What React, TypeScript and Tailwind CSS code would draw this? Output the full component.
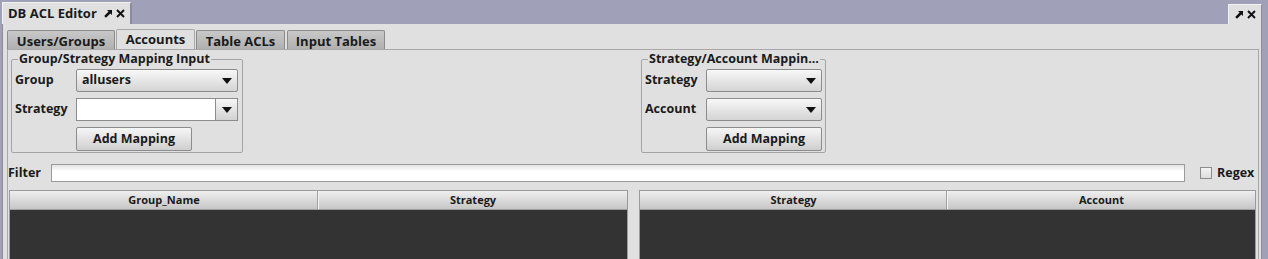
import { ReactNode } from "react"

const font = "font-['Open_Sans','DejaVu_Sans',sans-serif]"

function Caret () {
    return (
        <svg width="10" height="6" viewBox="0 0 10 6">
            <path d="M0 0 L10 0 L5 6 Z" fill="#111" />
        </svg>
    )
}

function UndockIcon () {
    return (
        <svg width="8" height="8" viewBox="0 0 8 8">
            <path d="M3 0 L8 0 L8 5 L6.4 3.4 L2 7.8 L0.2 6 L4.6 1.6 Z" fill="#111" />
        </svg>
    )
}

function CloseIcon () {
    return (
        <svg width="9" height="9" viewBox="0 0 9 9">
            <path d="M1 1 L8 8 M8 1 L1 8" stroke="#111" strokeWidth="1.9" />
        </svg>
    )
}

function Combo ({ value, width, editable }: { value?: string, width: string, editable?: boolean }) {
    if (editable) {
        return (
            <div className={ `flex h-[23px] ${ width }` }>
                <div className="flex-1 border border-[#8c8c8c] bg-white" />
                <div className="w-[22px] flex items-center justify-center border border-l-0 border-[#8c8c8c] bg-linear-to-b from-[#f6f6f6] to-[#d2d2d2]">
                    <Caret />
                </div>
            </div>
        )
    }
    return (
        <div className={ `flex items-center h-[23px] ${ width } border border-[#8c8c8c] rounded-[2px] bg-linear-to-b from-[#f8f8f8] to-[#d4d4d4] pl-[5px] pr-[5px]` }>
            <span className="flex-1 truncate">{ value }</span>
            <Caret />
        </div>
    )
}

function Button ({ children, width }: { children: ReactNode, width: string }) {
    return (
        <div className={ `flex items-center justify-center h-[24px] ${ width } border border-[#8c8c8c] rounded-[2px] bg-linear-to-b from-[#f6f6f6] to-[#cfcfcf]` }>
            { children }
        </div>
    )
}

function GroupBox ({ title, width, rows }: { title: string, width: string, rows: { label: string, combo: ReactNode }[] }) {
    return (
        <fieldset className={ `${ width } border border-[#a4a4a4] rounded-[2px] pl-[3px] pr-[3px] pb-[1px]` }>
            <legend className="ml-[3px] px-[1px] leading-[14px] whitespace-nowrap">{ title }</legend>
            <div className="flex flex-col gap-[6px] mt-[3px]">
                { rows.map(row => (
                    <div key={ row.label } className="flex items-center">
                        <span className="w-[61px]">{ row.label }</span>
                        { row.combo }
                    </div>
                )) }
                <div className="flex pl-[61px]">
                    <Button width="w-[116px]">Add Mapping</Button>
                </div>
            </div>
        </fieldset>
    )
}

function Table ({ cols, width }: { cols: string[], width: string }) {
    return (
        <div className={ `${ width } flex flex-col border border-[#9a9a9a] bg-[#333333] h-[80px]` }>
            <div className="flex h-[19px] bg-linear-to-b from-[#efefef] to-[#c6c6c6] border-b border-[#a0a0a0]">
                { cols.map((c, i) => (
                    <div key={ c } className={ `flex-1 flex items-center justify-center text-[11px] ${ i > 0 ? "border-l border-[#f4f4f4] shadow-[-1px_0_0_#a0a0a0]" : "" }` }>
                        { c }
                    </div>
                )) }
            </div>
        </div>
    )
}

export default function App () {
    const tabs = ["Users/Groups", "Accounts", "Table ACLs", "Input Tables"]

    return (
        <div className={ `w-[1268px] h-[259px] overflow-hidden bg-[#a0a0b8] flex flex-col ${ font } font-bold text-[12.5px] text-[#1a1a1a]` }>
            {/* Window tab strip */ }
            <div className="h-[24px] shrink-0 flex items-end pl-[2px] pr-[6px]">
                <div className="h-[22px] w-[130px] bg-[#e0e0e0] border-t border-l border-[#f2f2f2] border-r-2 border-r-[#8c8c9c] flex items-center pl-[5px] gap-[7px]">
                    <span className="text-[13px]">DB ACL Editor</span>
                    <div className="flex items-center gap-[4px]">
                        <UndockIcon />
                        <CloseIcon />
                    </div>
                </div>
                <div className="flex-1" />
                <div className="h-[20px] w-[34px] bg-[#e0e0e0] border-t border-l border-[#f2f2f2] border-r border-r-[#8c8c9c] flex items-center justify-center gap-[4px]">
                    <UndockIcon />
                    <CloseIcon />
                </div>
            </div>

            {/* Main panel */ }
            <div className="flex-1 min-h-0 overflow-hidden ml-[2px] mr-[6px] bg-[#e0e0e0] border-l border-r border-[#8c8c9c] pl-[4px] pr-[2px] pt-[5px]">
                {/* Tabs */ }
                <div className="flex items-end h-[20px] gap-[2px]">
                    { tabs.map(t => t === "Accounts" ? (
                        <div key={ t } className="h-[20px] w-[79px] -mx-[1px] bg-[#e0e0e0] border-t border-l border-r border-[#a8a8a8] rounded-t-[2px] flex items-center justify-center text-[13px] pt-[1px] relative z-10">
                            { t }
                        </div>
                    ) : (
                        <div key={ t } className={ `h-[19px] ${ t === "Users/Groups" ? "w-[108px]" : t === "Table ACLs" ? "w-[89px]" : "w-[98px]" } bg-linear-to-b from-[#c8c8c8] to-[#b0b0b0] border-t border-l border-r border-[#8c8c8c] rounded-t-[2px] flex items-center justify-center text-[13px] pt-[3px]` }>
                            { t }
                        </div>
                    )) }
                </div>

                {/* Tab content */ }
                <div className="border-t border-l border-r border-[#a8a8a8] h-[220px] pt-[2px]">
                    <div className="flex">
                        <div className="w-[626px] pl-[3px]">
                            <GroupBox
                                title="Group/Strategy Mapping Input"
                                width="w-[232px]"
                                rows={ [
                                    { label: "Group", combo: <Combo value="allusers" width="w-[162px]" /> },
                                    { label: "Strategy", combo: <Combo editable width="w-[162px]" /> },
                                ] }
                            />
                        </div>
                        <div className="pl-[7px]">
                            <GroupBox
                                title="Strategy/Account Mappin..."
                                width="w-[184px]"
                                rows={ [
                                    { label: "Strategy", combo: <Combo width="w-[116px]" /> },
                                    { label: "Account", combo: <Combo width="w-[116px]" /> },
                                ] }
                            />
                        </div>
                    </div>

                    {/* Filter row */ }
                    <div className="flex items-center h-[18px] mt-[11px]">
                        <span className="w-[43px]">Filter</span>
                        <div className="w-[1134px] h-[18px] border border-[#9a9a9a] bg-linear-to-b from-[#e4e4e4] via-white via-40% to-white" />
                        <div className="ml-[15px] w-[12px] h-[12px] border border-[#8c8c8c] bg-linear-to-b from-[#f4f4f4] to-[#dcdcdc]" />
                        <span className="ml-[5px]">Regex</span>
                    </div>

                    {/* Tables */ }
                    <div className="flex mt-[8px] pl-[1px] gap-[11px]">
                        <Table cols={ ["Group_Name", "Strategy"] } width="w-[619px]" />
                        <Table cols={ ["Strategy", "Account"] } width="w-[617px]" />
                    </div>
                </div>
            </div>
        </div>
    )
}
